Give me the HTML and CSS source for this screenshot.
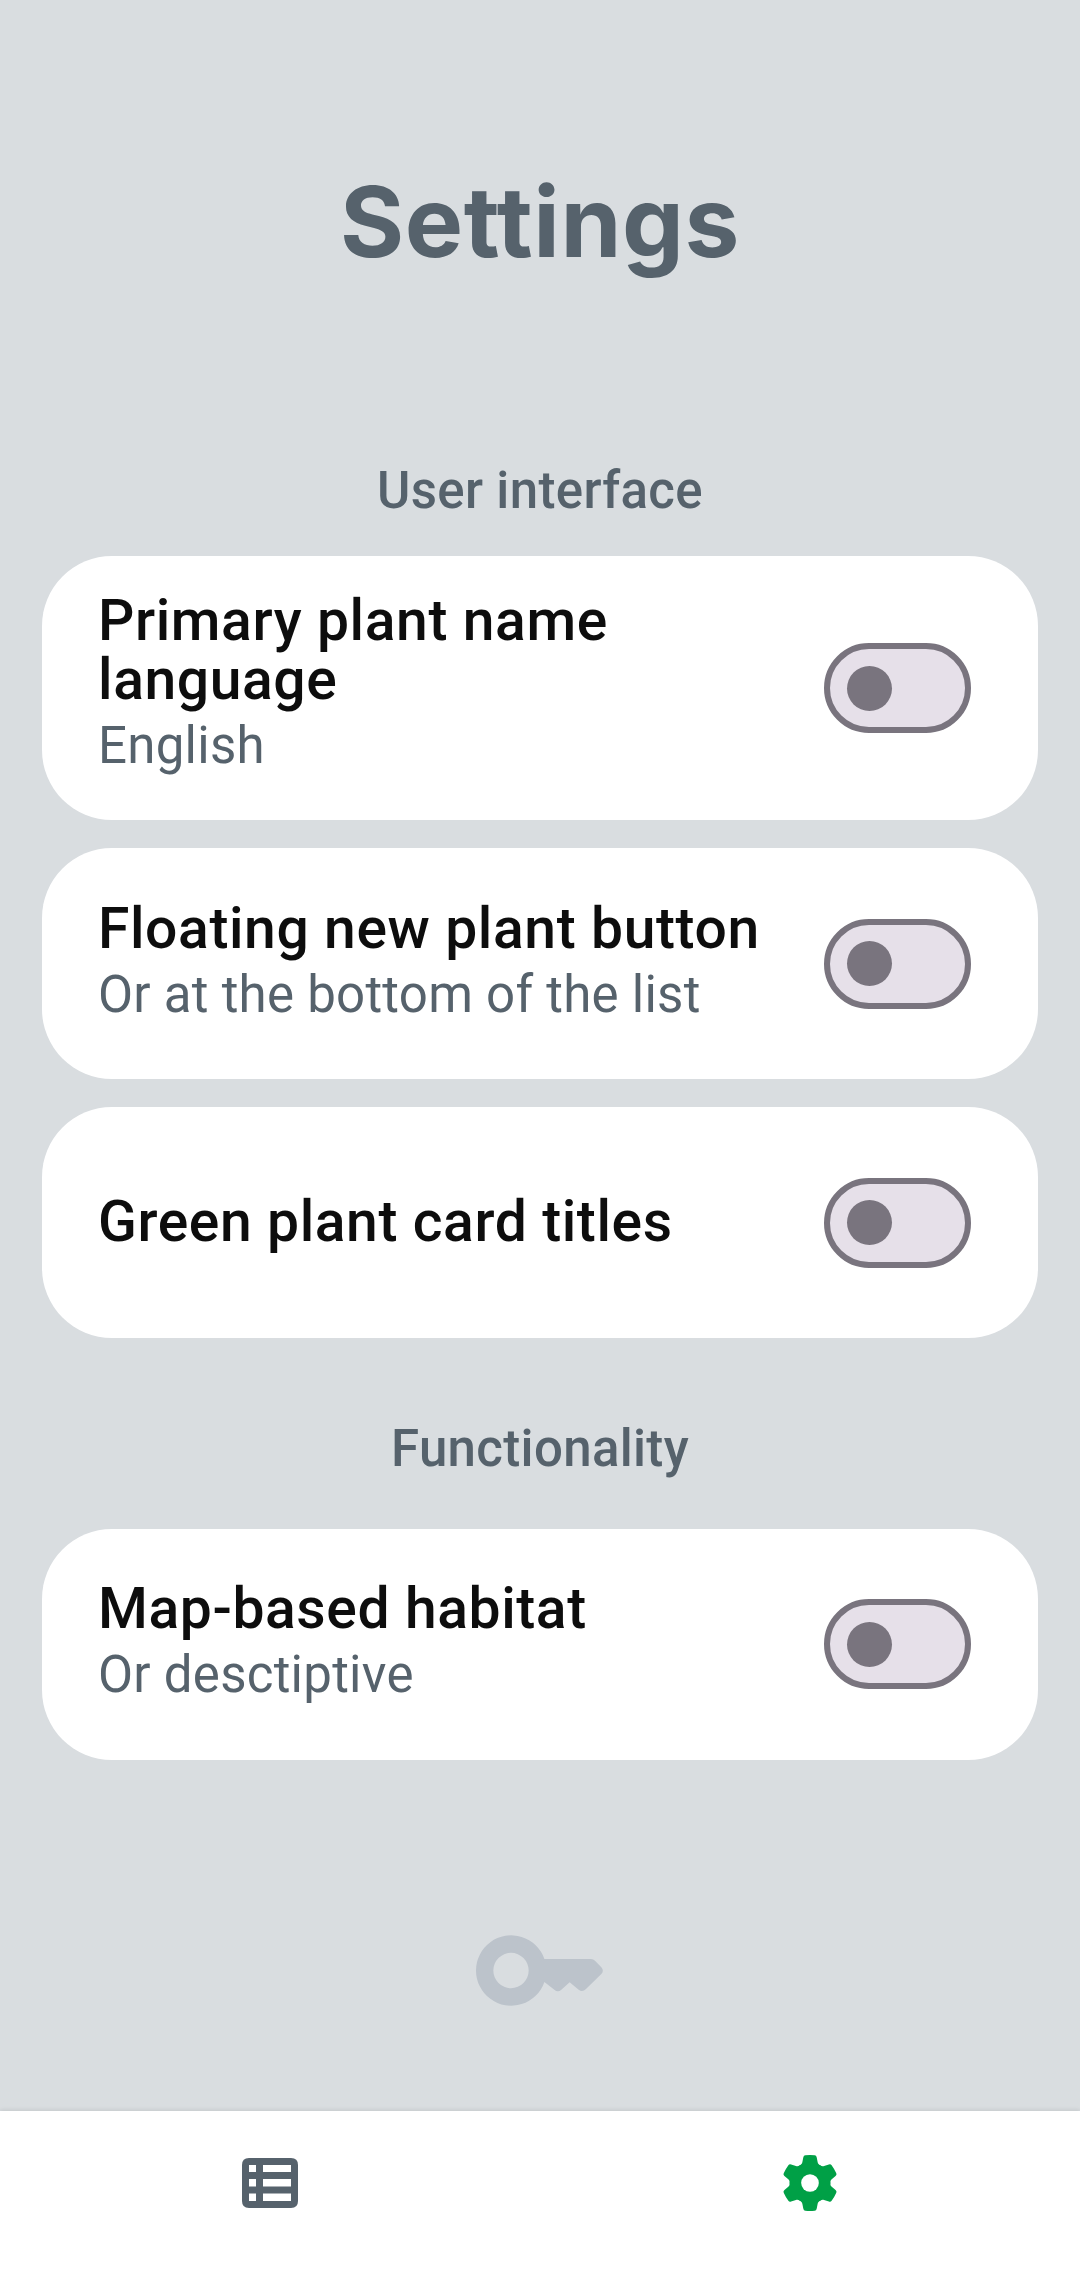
FILE: index.html
```
<!DOCTYPE html>
<html lang="en">
<head>
<meta charset="utf-8">
<title>Settings</title>
<link rel="stylesheet" href="styles.css">
</head>
<body>
<main class="screen">
  <h1 class="page-title">Settings</h1>

  <section class="group">
    <h2 class="group-title">User interface</h2>
    <div class="cards">
      <div class="card">
        <div class="card-text card-text-tall">
          <div class="card-title">Primary plant name language</div>
          <div class="card-sub">English</div>
        </div>
        <div class="switch" role="switch" aria-checked="false"><span class="thumb"></span></div>
      </div>
      <div class="card">
        <div class="card-text">
          <div class="card-title">Floating new plant button</div>
          <div class="card-sub">Or at the bottom of the list</div>
        </div>
        <div class="switch" role="switch" aria-checked="false"><span class="thumb"></span></div>
      </div>
      <div class="card">
        <div class="card-text">
          <div class="card-title">Green plant card titles</div>
        </div>
        <div class="switch" role="switch" aria-checked="false"><span class="thumb"></span></div>
      </div>
    </div>
  </section>

  <section class="group group-functionality">
    <h2 class="group-title">Functionality</h2>
    <div class="cards">
      <div class="card">
        <div class="card-text">
          <div class="card-title">Map-based habitat</div>
          <div class="card-sub">Or desctiptive</div>
        </div>
        <div class="switch" role="switch" aria-checked="false"><span class="thumb"></span></div>
      </div>
    </div>
  </section>

  <svg class="key" viewBox="0 0 381 213" aria-hidden="true">
    <path fill-rule="evenodd" d="M205.200 72H345Q352 72 357 77L376 97Q385 107 376 117L330 162Q319 173 308 164L281 142L256 164Q246 173 235 164L205.200 141A105.500 105.500 0 1 1 205.200 72ZM105 53.500A53 53 0 1 0 105 159.500A53 53 0 1 0 105 53.500Z"/>
  </svg>
</main>

<nav class="tabbar">
  <a class="tab">
    <svg class="icon-list" viewBox="0 0 56 50" aria-hidden="true">
      <path fill-rule="evenodd" d="M7 0H49Q56 0 56 7V43Q56 50 49 50H7Q0 50 0 43V7Q0 0 7 0ZM7 7V14H14V7ZM21 7V14H49V7ZM7 21V28.500H14V21ZM21 21V28.500H49V21ZM7 35.500V43H14V35.500ZM21 35.500V43H49V35.500Z"/>
    </svg>
  </a>
  <a class="tab tab-active">
    <svg class="icon-gear" viewBox="-84 -84 168 168" aria-hidden="true">
      <defs>
        <path id="tooth" d="M-31 -53C-26 -55.500 -24 -57 -23 -62L-20 -77Q-19 -82.500 -14 -83Q0 -84.500 14 -83Q19 -82.500 20 -77L23 -62C24 -57 26 -55.500 31 -53L0 0Z"/>
      </defs>
      <circle r="60.500"/>
      <use href="#tooth"/>
      <use href="#tooth" transform="rotate(60)"/>
      <use href="#tooth" transform="rotate(120)"/>
      <use href="#tooth" transform="rotate(180)"/>
      <use href="#tooth" transform="rotate(240)"/>
      <use href="#tooth" transform="rotate(300)"/>
      <circle class="gear-hole" r="26.500"/>
    </svg>
  </a>
</nav>
</body>
</html>
```
FILE: styles.css
```
* {
  box-sizing: border-box;
}

body {
  margin: 0;
  height: 2269px;
  display: flex;
  flex-direction: column;
  background: #d9dde0;
  color: #56626c;
  font-family: Roboto, sans-serif;
}

.screen {
  flex: 1;
  padding: 162px 42px 0;
}

.page-title {
  margin: 0;
  text-align: center;
  font: 700 98px/120px Inter, sans-serif;
  letter-spacing: 0.6px;
}

.group {
  margin-top: 178.5px;
}

.group-functionality {
  margin-top: 81.5px;
}

.group-title {
  margin: 0 0 35.5px;
  text-align: center;
  font-size: 51px;
  line-height: 60px;
  font-weight: 500;
  letter-spacing: 0.33px;
}

.group-functionality .group-title {
  margin-bottom: 49.5px;
}

.cards {
  display: flex;
  flex-direction: column;
  gap: 28.4px;
}

.card {
  display: flex;
  align-items: center;
  gap: 28px;
  min-height: 230.6px;
  padding: 35px 67px 35px 56px;
  border-radius: 70px;
  background: #fff;
}

.card-text {
  flex: 1;
  padding-bottom: 2px;
}

.card-text-tall {
  padding-bottom: 7px;
}

.card-title {
  color: #0d0d0d;
  font-size: 57px;
  line-height: 59px;
  font-weight: 500;
  letter-spacing: 0.6px;
}

.card-sub {
  margin: 7px 0 2px;
  font-size: 51px;
  line-height: 60px;
  letter-spacing: 0.26px;
}

.switch {
  flex: none;
  display: flex;
  align-items: center;
  width: 147px;
  height: 90px;
  padding-left: 17px;
  border: 6px solid #79747e;
  border-radius: 45px;
  background: #e6e0e9;
}

.thumb {
  width: 45px;
  height: 45px;
  border-radius: 50%;
  background: #79747e;
}

.key {
  display: block;
  width: 127px;
  height: 71px;
  margin: 175px 0 0 434px;
  fill: #bcc3cb;
}

.tabbar {
  display: flex;
  height: 158px;
  padding-bottom: 15px;
  background: #fff;
  box-shadow: 0 -1px 4px rgba(0, 0, 0, 0.1);
}

.tab {
  flex: 1;
  display: flex;
  align-items: center;
  justify-content: center;
  fill: #56626c;
}

.tab-active {
  fill: #00a046;
}

.icon-list {
  width: 56px;
  height: 50px;
}

.icon-gear {
  width: 56px;
  height: 56px;
}

.gear-hole {
  fill: #fff;
}
```
